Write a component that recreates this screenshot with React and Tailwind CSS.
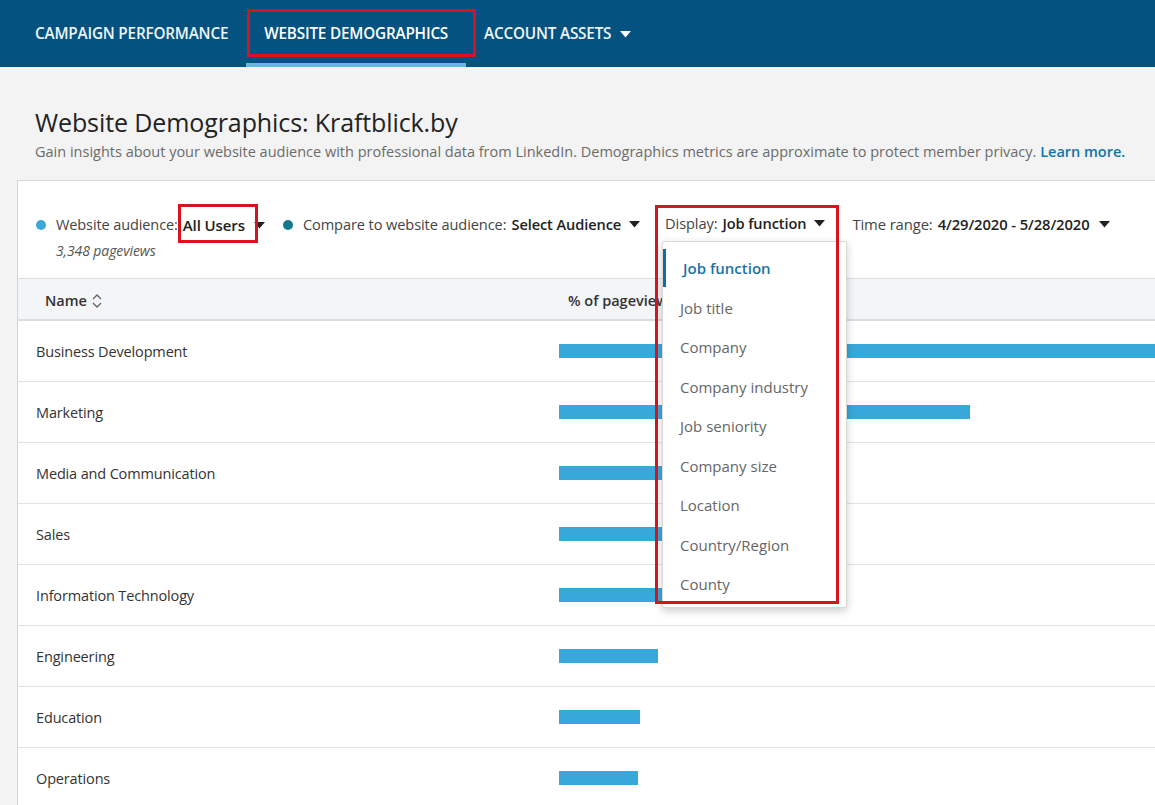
import React from "react";

const Caret = ({ className = "" }) => (
  <svg width="11" height="7" viewBox="0 0 11 7" className={className}>
    <path d="M0 0 L11 0 L5.5 6.5 Z" fill="currentColor" />
  </svg>
);

const rows = [
  { name: "Business Development", w: 700 },
  { name: "Marketing", w: 411 },
  { name: "Media and Communication", w: 200 },
  { name: "Sales", w: 190 },
  { name: "Information Technology", w: 180 },
  { name: "Engineering", w: 99 },
  { name: "Education", w: 81 },
  { name: "Operations", w: 79 },
];

const options = [
  "Job function",
  "Job title",
  "Company",
  "Company industry",
  "Job seniority",
  "Company size",
  "Location",
  "Country/Region",
  "County",
];

export default function App() {
  return (
    <div
      className="relative w-[1155px] h-[805px] overflow-hidden bg-[#f3f3f3] text-[#333]"
      style={{ fontFamily: '"Open Sans", "Noto Sans", sans-serif' }}
    >
      {/* Header */}
      <div className="h-[67px] bg-[#04527f] flex items-stretch pl-[17px]">
        <div className="px-[18px] flex items-center text-[15.3px] font-semibold text-[#eef5f9] tracking-[-0.2px]">
          CAMPAIGN PERFORMANCE
        </div>
        <div className="px-[18px] flex items-center text-[15.3px] font-semibold text-white tracking-[-0.2px] border-b-[4px] border-[#62b8e0] pt-[3px]">
          WEBSITE DEMOGRAPHICS
        </div>
        <div className="px-[18px] flex items-center gap-[9px] text-[15.3px] font-semibold text-[#eef5f9] tracking-[-0.2px]">
          ACCOUNT ASSETS
          <Caret className="text-white mt-[2px]" />
        </div>
      </div>

      {/* Title */}
      <div className="px-[35px] pt-[38px]">
        <h1 className="text-[25px] leading-[34px] text-[#222] tracking-[-0.1px]">
          Website Demographics: Kraftblick.by
        </h1>
        <p className="mt-[3px] text-[14.5px] leading-[20px] text-[#6b6b6b] whitespace-nowrap">
          Gain insights about your website audience with professional data from LinkedIn. Demographics metrics are approximate to protect member privacy.{" "}
          <span className="font-semibold text-[#0f73a8]">Learn more.</span>
        </p>
      </div>

      {/* Card */}
      <div className="ml-[17px] mt-[18px] bg-white border-l border-t border-[#d6d6d6]">
        <div className="flex items-start pt-[33px] pl-[18px] h-[97px] text-[14.5px] tracking-[-0.1px]">
          <div className="flex flex-col">
            <div className="flex items-center">
              <span className="w-[10px] h-[10px] rounded-full bg-[#3aa8da] mr-[10px]" />
              <span className="text-[#444]">Website audience:</span>
              <span className="font-semibold text-[#222] ml-[5px] text-[15px]">All Users</span>
              <Caret className="text-[#222] ml-[9px]" />
            </div>
            <span className="italic text-[#555] ml-[20px] mt-[3px] text-[14px]">3,348 pageviews</span>
          </div>
          <div className="flex items-center ml-[18px]">
            <span className="w-[10px] h-[10px] rounded-full bg-[#147b8e] mr-[10px]" />
            <span className="text-[#444] text-[14.6px]">Compare to website audience:</span>
            <span className="font-semibold text-[#222] ml-[5px] text-[14.6px]">Select Audience</span>
            <Caret className="text-[#222] ml-[8px]" />
          </div>
          <div className="flex items-center ml-[25px] mt-[-1px]">
            <span className="text-[#444] text-[14.6px]">Display:</span>
            <span className="font-semibold text-[#222] ml-[5px] text-[14.6px]">Job function</span>
            <Caret className="text-[#222] ml-[8px]" />
          </div>
          <div className="flex items-center ml-[27px] mt-[-1px]">
            <span className="text-[#444] text-[14.8px]">Time range:</span>
            <span className="font-semibold text-[#222] ml-[5px] text-[14.8px]">4/29/2020 - 5/28/2020</span>
            <Caret className="text-[#222] ml-[9px]" />
          </div>
        </div>

        {/* Table header */}
        <div className="h-[43px] flex items-center pt-[3px] bg-[#f3f5f6] border-t border-b-2 border-[#dcdcdc] text-[14.5px] font-semibold text-[#333]">
          <div className="w-[550px] shrink-0 pl-[27px] flex items-center gap-[4px]">
            Name
            <svg width="12" height="16" viewBox="0 0 12 16" className="text-[#666]">
              <path d="M2 6 L6 2 L10 6 M2 10 L6 14 L10 10" fill="none" stroke="currentColor" strokeWidth="1.4" />
            </svg>
          </div>
          <div>% of pageviews</div>
        </div>

        {rows.map((r) => (
          <div key={r.name} className="h-[61px] flex items-center border-b border-[#e3e3e3]">
            <div className="w-[541px] shrink-0 pl-[18px] text-[14.5px] text-[#333] tracking-[-0.15px] pt-[1px]">{r.name}</div>
            <div className="h-[14px] shrink-0 bg-[#37a8d9]" style={{ width: r.w }} />
          </div>
        ))}
      </div>

      {/* Dropdown */}
      <div className="absolute left-[662px] top-[241px] w-[185px] h-[367px] bg-white border border-[#d8d8d8] rounded-[2px] shadow-[0_3px_8px_rgba(0,0,0,0.2)] pt-[7px]">
        {options.map((o, i) => (
          <div
            key={o}
            className={
              i === 0
                ? "h-[38px] flex items-center pl-[17px] border-l-[3px] border-[#0e6ea0] text-[#1a73a6] font-semibold text-[15px] mb-[1px]"
                : "h-[39.5px] flex items-center pl-[17px] text-[15px] text-[#666]"
            }
          >
            {o}
          </div>
        ))}
      </div>

      {/* Annotation boxes */}
      <div className="absolute left-[247px] top-[9px] w-[229px] h-[48px] border-[3px] border-[#d7141c]" />
      <div className="absolute left-[178px] top-[204px] w-[80px] h-[39px] border-[3px] border-[#d7141c]" />
      <div className="absolute left-[655px] top-[205px] w-[184px] h-[399px] border-[3px] border-[#d7141c]" />
    </div>
  );
}
